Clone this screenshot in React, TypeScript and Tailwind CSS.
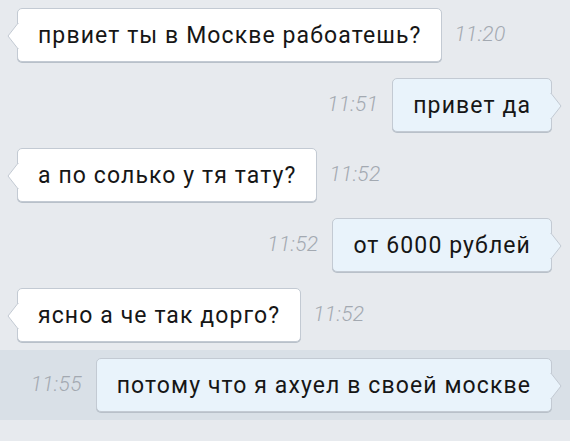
import React from 'react';

interface Message {
  text: string;
  time: string;
  mine: boolean;
  highlighted?: boolean;
}

const messages: Message[] = [
  { text: 'првиет ты в Москве рабоатешь?', time: '11:20', mine: false },
  { text: 'привет да', time: '11:51', mine: true },
  { text: 'а по солько у тя тату?', time: '11:52', mine: false },
  { text: 'от 6000 рублей', time: '11:52', mine: true },
  { text: 'ясно а че так дорго?', time: '11:52', mine: false },
  { text: 'потому что я ахуел в своей москве', time: '11:55', mine: true, highlighted: true },
];

const Tail: React.FC<{ mine: boolean }> = ({ mine }) => (
  <svg
    width="12"
    height="26"
    viewBox="0 0 12 26"
    className={mine ? 'absolute right-[-11px] top-[14px]' : 'absolute left-[-11px] top-[14px]'}
  >
    {mine ? (
      <path d="M0.5 0 L2 1.5 L11 13 L2 24.5 L0.5 26" fill="#e9f3fb" stroke="#c3cad3" strokeWidth="1" />
    ) : (
      <path d="M11.5 0 L10 1.5 L1 13 L10 24.5 L11.5 26" fill="#ffffff" stroke="#c3cad3" strokeWidth="1" />
    )}
  </svg>
);

const Time: React.FC<{ value: string }> = ({ value }) => (
  <span className="text-[21px] font-light italic tracking-[0.3px] text-[#a3a9b1]">{value}</span>
);

const Bubble: React.FC<{ message: Message }> = ({ message }) => (
  <div
    className={
      message.mine
        ? 'relative flex h-[54px] items-center rounded-[5px] border border-[#c3cad3] bg-[#e9f3fb] px-[20px] shadow-[0_1px_0_#b8c0c9]'
        : 'relative flex h-[54px] items-center rounded-[5px] border border-[#c3cad3] bg-white px-[20px] shadow-[0_1px_0_#b8c0c9]'
    }
  >
    <Tail mine={message.mine} />
    <span className="text-[23px] leading-none tracking-[1.1px] text-[#161616]">{message.text}</span>
  </div>
);

export default function App() {
  return (
    <div
      className="h-[441px] w-[570px] overflow-hidden bg-[#e7eaee]"
      style={{ fontFamily: 'Roboto, "Noto Sans", sans-serif' }}
    >
      {messages.map((message, index) => (
        <div
          key={index}
          className={
            (message.highlighted ? 'bg-[#d9e0e7] ' : '') +
            (message.mine
              ? 'flex h-[70px] items-center justify-end gap-[14px] pr-[18px]'
              : 'flex h-[70px] items-center gap-[12px] pl-[17px]')
          }
        >
          {message.mine ? (
            <>
              <Time value={message.time} />
              <Bubble message={message} />
            </>
          ) : (
            <>
              <Bubble message={message} />
              <Time value={message.time} />
            </>
          )}
        </div>
      ))}
    </div>
  );
}
